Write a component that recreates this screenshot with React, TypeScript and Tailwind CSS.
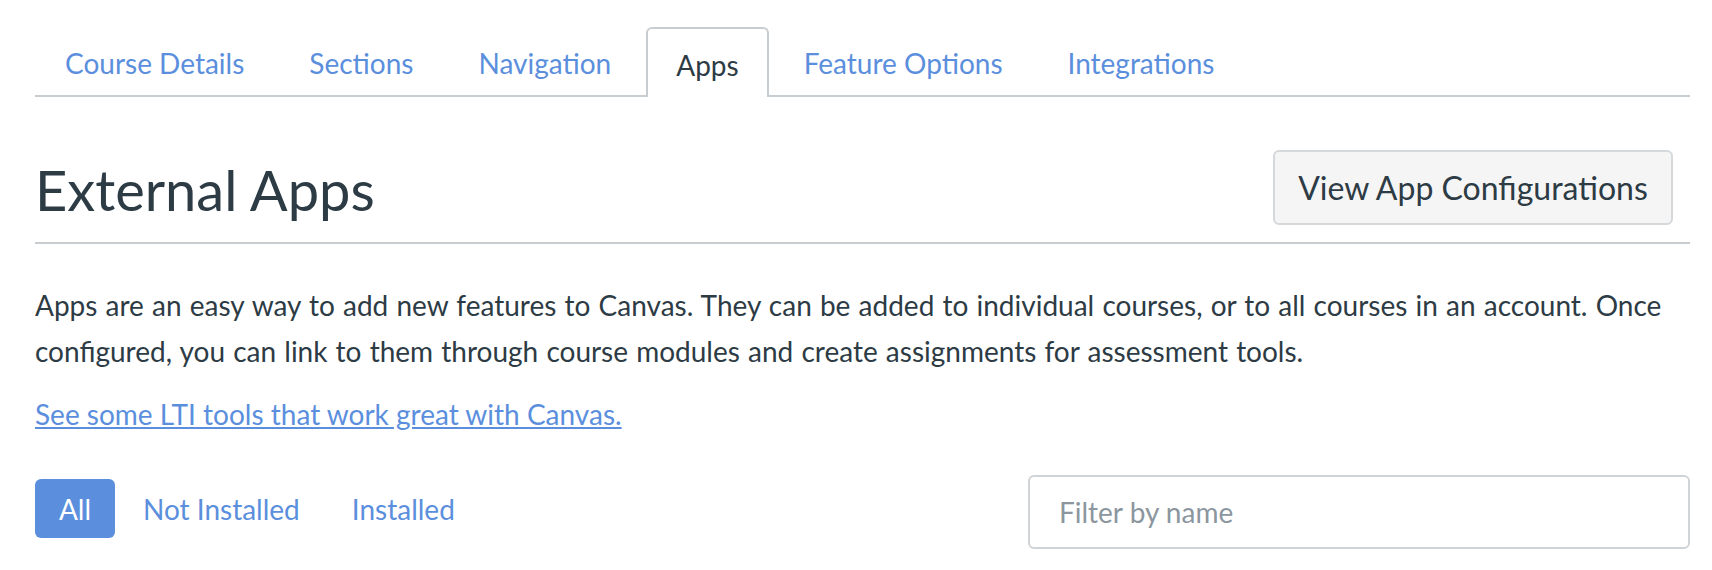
const tabs = ["Course Details", "Sections", "Navigation", "Apps", "Feature Options", "Integrations"];

export default function App() {
  return (
    <div className="min-h-[570px] bg-white pl-[35px] pr-[22px] pt-[27px] font-['Lato','Liberation_Sans',sans-serif] text-[#2d3b45]">
      <ul className="flex gap-[5px] border-b-2 border-[#c7cdd1]">
        {tabs.map((t) =>
          t === "Apps" ? (
            <li
              key={t}
              className="-mb-[2px] flex h-[70px] items-center rounded-t-[6px] border-2 border-b-0 border-[#c7cdd1] bg-white px-[28px] text-[28px] text-[#2d3b45]"
            >
              <span className="relative top-[2px]">{t}</span>
            </li>
          ) : (
            <li key={t} className="flex h-[68px] items-center px-[30px] text-[28px] text-[#5b8fdd]">
              <span className="relative top-[2px]">{t}</span>
            </li>
          )
        )}
      </ul>

      <div className="mt-[53px] flex items-center justify-between border-b-2 border-[#c7cdd1] pb-[17px]">
        <h1 className="relative top-[2px] text-[56px] font-normal leading-none text-[#2d3b45]">External Apps</h1>
        <button className="mr-[17px] h-[75px] w-[400px] rounded-[6px] border-2 border-[#d5d9dc] bg-[#f5f5f5] text-[32px] text-[#2d3b45]">
          View App Configurations
        </button>
      </div>

      <p className="mt-[38px] text-[28px] leading-[46px] text-[#2d3b45] [word-spacing:1px]">
        Apps are an easy way to add new features to Canvas. They can be added to individual courses, or to all courses in an
        account. Once configured, you can link to them through course modules and create assignments for assessment tools.
      </p>

      <a href="#" className="mt-[17px] block w-fit text-[28px] leading-[46px] text-[#5b8fdd] underline">
        See some LTI tools that work great with Canvas.
      </a>

      <div className="mt-[38px] flex items-start justify-between">
        <div className="mt-[4px] flex items-center">
          <button className="h-[59px] w-[80px] rounded-[6px] bg-[#5b8fdd] text-[28px] text-white">All</button>
          <button className="ml-[28px] text-[28px] text-[#5b8fdd]">Not Installed</button>
          <button className="ml-[52px] text-[28px] text-[#5b8fdd]">Installed</button>
        </div>
        <input
          placeholder="Filter by name"
          className="h-[74px] w-[662px] rounded-[6px] border-2 border-[#d0d4d7] px-[29px] text-[28px] text-[#2d3b45] outline-none placeholder:text-[#8b969e]"
        />
      </div>
    </div>
  );
}
